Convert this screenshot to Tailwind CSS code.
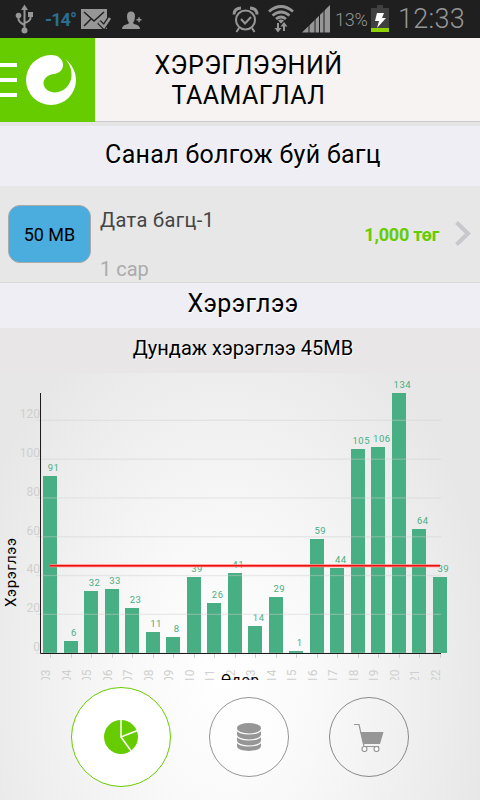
<!DOCTYPE html>
<html lang="mn">
<head>
  <meta charset="UTF-8">
  <meta name="viewport" content="width=device-width, initial-scale=1.0">
  <title>Хэрэглээний таамаглал</title>
  <script src="https://cdn.jsdelivr.net/npm/@tailwindcss/browser@4"></script>
</head>
<body class="w-[480px] h-[800px] overflow-hidden flex flex-col font-[Roboto,sans-serif] text-black bg-[radial-gradient(ellipse_270px_390px_at_225px_680px,#ffffff,#f9f9f9_35%,#e7e7e7)]">

  <!-- Status bar -->
  <div class="h-[38px] shrink-0 bg-[#1f1f1f] flex items-center text-[#969696]">
    <svg class="ml-[15px] w-5 h-[30px]" viewBox="0 0 20 30" fill="none" stroke="#969696" stroke-width="2">
      <path d="M9.500 4v22M3.500 12v3q0 3 6 6M15.500 12v2q0 3-6 5"/>
      <path d="M9.500 0.500l3.500 5.500h-7z" fill="#969696" stroke="none"/>
      <circle cx="3.500" cy="11.500" r="2.800" fill="#969696" stroke="none"/>
      <rect x="13" y="8" width="5" height="5" fill="#969696" stroke="none"/>
      <circle cx="9.500" cy="26.500" r="3" fill="#969696" stroke="none"/>
    </svg>
    <span class="ml-[10px] w-[32px] text-[18px] font-bold tracking-[-0.9px] text-[#2a6f91] whitespace-nowrap">-14°</span>
    <svg class="ml-1 w-[31px] h-[22px]" viewBox="0 0 31 22">
      <path d="M0 1h26v20h-26z" fill="#969696"/>
      <path d="M3 4l10 9 10-9M3 18l7-7M23 18l-4-5" fill="none" stroke="#1f1f1f" stroke-width="1.500"/>
      <path d="M18 14l5 5 6-9" fill="none" stroke="#1f1f1f" stroke-width="5"/>
      <path d="M18 14l5 5 6-9" fill="none" stroke="#969696" stroke-width="2.600"/>
    </svg>
    <svg class="ml-[9px] mt-[2px] w-[22px] h-5" viewBox="0 0 22 20" fill="#969696">
      <path d="M1 19q0-4 6-5l1-1q-2-2-2-6.500Q6 1.500 10 1.500t4 5q0 4.500-2 6.500l1 1q6 1 6 5z"/>
      <path d="M15.500 9h5v1.500h-5zM17.300 7.200h1.500v5h-1.500z"/>
    </svg>
    <svg class="ml-[89px] w-[27px] h-[27px]" viewBox="0 0 27 27" fill="none" stroke="#969696" stroke-width="2">
      <circle cx="13.500" cy="14" r="9.500"/>
      <path d="M9 13l4 4.500 6-6.500M7 22l-2.500 4M20 22l2.500 4"/>
      <path d="M2 8.500q0-6 7-6.500M25 8.500q0-6-7-6.500" stroke-width="3"/>
    </svg>
    <svg class="ml-[9px] w-[26px] h-[28px]" viewBox="0 0 26 28" fill="none" stroke="#969696" stroke-width="2.700">
      <path d="M1 6.500q12-10 24 0M4.500 10.500q8.500-7 17 0M8 14q5-4 10 0"/>
      <path d="M10 15.500q3-2 6 0l-3 3z" fill="#969696" stroke="none"/>
      <path d="M10 18v6M16 26v-6" stroke-width="2"/>
      <path d="M6.500 23h7l-3.500 4.500zM12.500 21.500h7l-3.500-4.500z" fill="#969696" stroke="none"/>
    </svg>
    <svg class="ml-2 w-[28px] h-[28px]" viewBox="0 0 28 28" fill="#969696">
      <path d="M0 27.500L28 0v27.500z"/>
      <path d="M6.500 0h1v28h-1zM12.500 0h1v28h-1zM17 0h1v28h-1zM21.500 0h1v28h-1z" fill="#1f1f1f"/>
    </svg>
    <span class="ml-[5px] w-[33px] text-[18px] font-light tracking-[-0.2px] whitespace-nowrap">13%</span>
    <svg class="ml-[3px] w-[18px] h-[28px]" viewBox="0 0 18 28">
      <path d="M6 0h6v3h6v24H0V3h6z" fill="#404040"/>
      <path d="M0 23h18v4H0z" fill="#8fd400"/>
      <path d="M6 8h7l-2 5h4L6 23l2-7H4z" fill="#fff"/>
    </svg>
    <span class="ml-[9px] text-[27px] font-light tracking-[0.3px] whitespace-nowrap">12:33</span>
  </div>

  <!-- Header -->
  <header class="h-[84px] shrink-0 flex bg-[#f6f3f2] border-b border-[#cacaca]">
    <div class="w-[95px] h-[84px] shrink-0 bg-[#66cc00] flex items-center">
      <div class="w-[17px] flex flex-col gap-[11px]">
        <div class="h-1 bg-white"></div>
        <div class="h-1 bg-white"></div>
        <div class="h-1 bg-white"></div>
      </div>
      <svg class="ml-[9px] w-[50px] h-[50px]" viewBox="0 0 50 50">
        <path d="M39 4C46 9 50 17 50 25A25 25 0 1 1 25 0C33 0 37 5 37 10C37 15 33 18.500 27.500 19C21 20 17.500 24 17.500 28.500C18 34 23 37.500 29 37.500C38 37 45 30 45.500 21C46 14 43 8 39 4z" fill="#fff"/>
      </svg>
    </div>
    <h1 class="w-[307px] pt-[13px] text-center text-[25px] leading-[30px] tracking-[0.5px]">ХЭРЭГЛЭЭНИЙ<br>ТААМАГЛАЛ</h1>
  </header>
  <div class="h-1 shrink-0 bg-[#e5e5e5]"></div>

  <h2 class="h-[60px] shrink-0 bg-[#efeef4] text-center text-[25px] leading-[58px] tracking-[0.3px] pl-[6px] [text-shadow:1px_1px_1px_#fff]">Санал болгож буй багц</h2>

  <!-- Offered package -->
  <div class="h-[97px] shrink-0 bg-[#e7e7e7] border-b border-[#d9d9d9] flex px-2">
    <div class="mt-[19px] w-[83px] h-[58px] rounded-xl border border-[#a9a9a9] bg-[#4aaddd] flex items-center justify-center text-[18px]">50 MB</div>
    <div class="ml-[9px] flex flex-col text-[20px] leading-[28px]">
      <span class="pt-5 text-[#444] tracking-[0.4px]">Дата багц-1</span>
      <span class="pt-[21px] text-[#ababab]">1 сар</span>
    </div>
    <span class="ml-auto pt-[37px] text-[18px] leading-6 font-bold tracking-[-0.2px] text-[#66cc00]">1,000 төг</span>
    <svg class="ml-[15px] mt-[34px] w-[18px] h-[27px]" viewBox="0 0 18 27" fill="none" stroke="#c7c7cc" stroke-width="4">
      <path d="M2.500 2.500L14 13.500 2.500 24.500"/>
    </svg>
  </div>

  <h2 class="h-[45px] shrink-0 bg-[#efeef4] text-center text-[25px] leading-[41px] tracking-[0.4px] pl-[6px] [text-shadow:1px_1px_1px_#fff]">Хэрэглээ</h2>
  <h3 class="h-[45px] shrink-0 bg-[#e8e6e7] text-center text-[20px] leading-[41px] pl-[6px] [text-shadow:1px_1px_1px_#fff]">Дундаж хэрэглээ 45MB</h3>

  <!-- Usage chart -->
  <svg id="chart" class="w-[480px] h-[307px] shrink-0 overflow-hidden" viewBox="0 373 480 307" font-family="Roboto, sans-serif">
    <g id="bars" fill="#48ae83"></g>
    <g id="grid" fill="#cfcfcf" font-size="12"></g>
    <path d="M40.500 393V653.500H441" fill="none" stroke="#1c1c1c"/>
    <path d="M50 565.700H440" stroke="#ff8c8c" stroke-width="3"/>
    <path d="M50 565.700H440" stroke="#f01010" stroke-width="1.500"/>
    <text x="221" y="684.500" font-size="15" textLength="38">Өдөр</text>
    <text transform="translate(16 607) rotate(-90)" font-size="15" textLength="69">Хэрэглээ</text>
  </svg>

  <!-- Bottom tabs -->
  <nav class="h-[120px] shrink-0 flex pl-[71px] pt-[7px]">
    <a href="#" class="w-[100px] h-[100px] rounded-full border border-[#66cc00] bg-white flex items-center justify-center">
      <svg class="w-[34px] h-[34px]" viewBox="0 0 34 34">
        <circle cx="17" cy="17" r="17" fill="#66cc00"/>
        <path d="M17 0V17L33.500 10.500M17 17L27.500 31.500" fill="none" stroke="#fff" stroke-width="1.500"/>
      </svg>
    </a>
    <a href="#" class="ml-[38px] mt-[10px] w-20 h-20 rounded-full border border-[#969696] bg-white/50 flex items-center justify-center">
      <svg class="w-6 h-7" viewBox="0 0 24 28" fill="#969696">
        <path d="M0 5v18c0 6.500 24 6.500 24 0V5z"/>
        <ellipse cx="12" cy="5" rx="12" ry="5"/>
        <path d="M-0.500 5.500c0 7.300 25 7.300 25 0M-0.500 11.500c0 7.300 25 7.300 25 0M-0.500 17.500c0 7.300 25 7.300 25 0" fill="none" stroke="#fff" stroke-width="1.200"/>
      </svg>
    </a>
    <a href="#" class="ml-10 mt-[10px] w-20 h-20 rounded-full border border-[#8a8a8a] flex items-center justify-center">
      <svg class="w-[30px] h-[29px]" viewBox="0 0 30 29" fill="none" stroke="#969696" stroke-width="1.200">
        <path d="M0 1.500h5l5 22h15"/>
        <path d="M6.500 9H29.500L26 21H9.500z" fill="#969696" stroke="none"/>
        <circle cx="10.500" cy="26" r="2.500" fill="#fff"/>
        <circle cx="22.500" cy="26" r="2.500" fill="#fff"/>
      </svg>
    </a>
  </nav>

  <script>
    const usage = [
      ['03', 91], ['04', 6], ['05', 32], ['06', 33], ['07', 23], ['08', 11], ['09', 8],
      ['10', 39], ['11', 26], ['12', 41], ['13', 14], ['14', 29], ['15', 1], ['16', 59],
      ['17', 44], ['18', 105], ['19', 106], ['20', 134], ['21', 64], ['22', 39]
    ];
    const baseY = 653;
    const scale = 1.94;
    const bars = document.getElementById('bars');
    const grid = document.getElementById('grid');

    usage.forEach(([day, value], i) => {
      const x = 50 + i * 20.52;
      const left = Math.round(x - 7);
      const top = Math.round(baseY - value * scale);
      bars.innerHTML += `
        <rect x="${left}" y="${top}" width="${Math.round(x + 7) - left}" height="${baseY - top}" />
        <text x="${x + 3.5}" y="${top - 5}" font-size="9.5" letter-spacing="0.5" text-anchor="middle">${value}</text>
      `;
      grid.innerHTML += `
        <rect x="${Math.round(x)}" y="654" width="1" height="4" />
        <text transform="translate(${x} 669.5) rotate(-90)" text-anchor="end">${day}</text>
      `;
    });

    for (let v = 0; v <= 120; v += 20) {
      const y = baseY - v * scale;
      grid.innerHTML += `
        <rect x="36" y="${y - 0.5}" width="405" height="1.3" fill-opacity="0.4" />
        <text x="40" y="${y - 2}" text-anchor="end">${v}</text>
      `;
    }
  </script>
</body>
</html>
